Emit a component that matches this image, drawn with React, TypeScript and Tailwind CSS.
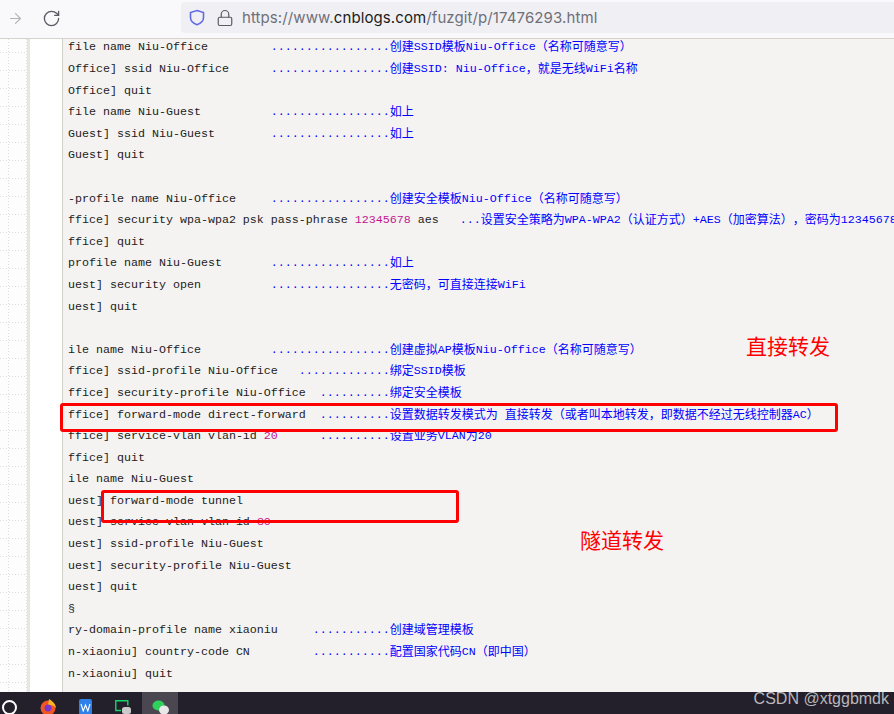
import { RotateCw, ArrowRight, Lock } from 'lucide-react';

const MONO = '"Liberation Mono", "Noto Sans CJK SC", monospace';

// k = command text, n = number, b = blue comment
type Seg = [string, string];

const c = (s: string, width = 29) => s.padEnd(width, ' ');
const dots = (n: number) => '.'.repeat(n);

const LINES: Seg[][] = [
    [['k', c('file name Niu-Office')], ['b', dots(17) + '创建SSID模板Niu-Office（名称可随意写）']],
    [['k', c('Office] ssid Niu-Office')], ['b', dots(17) + '创建SSID: Niu-Office，就是无线WiFi名称']],
    [['k', 'Office] quit']],
    [['k', c('file name Niu-Guest')], ['b', dots(17) + '如上']],
    [['k', c('Guest] ssid Niu-Guest')], ['b', dots(17) + '如上']],
    [['k', 'Guest] quit']],
    [],
    [['k', c('-profile name Niu-Office')], ['b', dots(17) + '创建安全模板Niu-Office（名称可随意写）']],
    [['k', 'ffice] security wpa-wpa2 psk pass-phrase '], ['n', '12345678'], ['k', ' aes   '], ['b', '...设置安全策略为WPA-WPA2（认证方式）+AES（加密算法），密码为12345678']],
    [['k', 'ffice] quit']],
    [['k', c('profile name Niu-Guest')], ['b', dots(17) + '如上']],
    [['k', c('uest] security open')], ['b', dots(17) + '无密码，可直接连接WiFi']],
    [['k', 'uest] quit']],
    [],
    [['k', c('ile name Niu-Office')], ['b', dots(17) + '创建虚拟AP模板Niu-Office（名称可随意写）']],
    [['k', c('ffice] ssid-profile Niu-Office', 33)], ['b', dots(13) + '绑定SSID模板']],
    [['k', c('ffice] security-profile Niu-Office', 36)], ['b', dots(10) + '绑定安全模板']],
    [['k', c('ffice] forward-mode direct-forward', 36)], ['b', dots(10) + '设置数据转发模式为 直接转发（或者叫本地转发，即数据不经过无线控制器AC）']],
    [['k', 'ffice] service-vlan vlan-id '], ['n', '20'], ['k', ' '.repeat(6)], ['b', dots(10) + '设置业务VLAN为20']],
    [['k', 'ffice] quit']],
    [['k', 'ile name Niu-Guest']],
    [['k', 'uest] forward-mode tunnel']],
    [['k', 'uest] service-vlan vlan-id '], ['n', '30']],
    [['k', 'uest] ssid-profile Niu-Guest']],
    [['k', 'uest] security-profile Niu-Guest']],
    [['k', 'uest] quit']],
    [['k', '§']],
    [['k', c('ry-domain-profile name xiaoniu', 35)], ['b', dots(11) + '创建域管理模板']],
    [['k', c('n-xiaoniu] country-code CN', 35)], ['b', dots(11) + '配置国家代码CN（即中国）']],
    [['k', 'n-xiaoniu] quit']],
];

// Chinese runs are 12px wide while the latin cells stay on a 7px pitch
function Mixed({ text }: { text: string }) {
    const parts = text.split(/([\u3000-\u9fff\uff00-\uffef]+)/);
    return (
        <>
            {parts.map((part, i) =>
                i % 2 === 1 ? (
                    <span key={i} className="text-[12px] align-[-1px] [text-spacing-trim:space-all]">
                        {part}
                    </span>
                ) : (
                    part
                ),
            )}
        </>
    );
}

function CodeLine({ segs }: { segs: Seg[] }) {
    return (
        <div className="h-[21.6px] whitespace-pre">
            {segs.map(([kind, text], i) => (
                <span
                    key={i}
                    className={kind === 'k' ? 'text-[#1c1c1c]' : kind === 'n' ? 'text-[#c0168f]' : 'text-[#0000ff]'}
                >
                    <Mixed text={text} />
                </span>
            ))}
        </div>
    );
}

function Toolbar() {
    return (
        <div className="h-[39px] shrink-0 flex items-center bg-[#f9f9fb] border-b border-[#d6d3cd]">
            <ArrowRight size={17} strokeWidth={1.6} className="ml-[7px] mb-[2px] text-[#b4b4b8]" />
            <RotateCw size={19} strokeWidth={1.7} className="ml-[18px] mb-[2px] text-[#5b5b66]" />
            <div className="ml-[120px] w-[714px] h-[31px] mb-[3px] rounded-l-[4px] bg-[#f0f0f4] flex items-center">
                <svg width="16" height="17" viewBox="0 0 16 17" className="ml-[8px]" fill="none">
                    <defs>
                        <linearGradient id="shield" x1="1" y1="16" x2="15" y2="1">
                            <stop offset="0" stopColor="#2f7bf0" />
                            <stop offset="1" stopColor="#8f5ad8" />
                        </linearGradient>
                    </defs>
                    <path
                        d="M8 1.500 14.500 3.500v5c0 3.500-3 6-6.500 7.200C4.500 14.500 1.500 12 1.500 8.500v-5z"
                        stroke="url(#shield)"
                        strokeWidth="1.600"
                    />
                </svg>
                <Lock size={18} strokeWidth={1.6} className="ml-[11px] text-[#5b5b66]" />
                <span className="ml-[8px] pt-[1px] text-[15px] tracking-[0.1px] text-[#6f6f78] font-['Inter',sans-serif]">
                    https://www.<span className="text-[#1b1b20]">cnblogs.com</span>/fuzgit/p/17476293.html
                </span>
            </div>
        </div>
    );
}

function Taskbar() {
    return (
        <div className="h-[22px] shrink-0 bg-[#231f2b] flex items-start overflow-hidden">
            <div className="ml-[2px] mt-[8px] w-[15px] h-[15px] rounded-full border-[2px] border-white" />
            {/* firefox */}
            <svg width="16" height="16" viewBox="0 0 16 16" className="ml-[23px] mt-[7px]">
                <circle cx="8" cy="9" r="7.500" fill="#f2551f" />
                <path d="M9 0c3 2 6.500 4 7 9-1.500-2-4-3.500-8-3z" fill="#fbb326" />
                <circle cx="8" cy="9" r="3.500" fill="#7b35c8" />
            </svg>
            {/* wps */}
            <div className="ml-[23px] mt-[7px] w-[13px] h-[16px] rounded-[2px] bg-[#2f80e8] flex justify-center">
                <svg width="11" height="9" viewBox="0 0 11 9" className="mt-[4px]" fill="none">
                    <path d="M1 1l2.200 7L5.500 2l2.300 6L10 1" stroke="#fff" strokeWidth="1.100" />
                </svg>
            </div>
            {/* green window with chat bubble */}
            <svg width="16" height="15" viewBox="0 0 16 15" className="ml-[23px] mt-[8px]" fill="none">
                <path d="M6 10.500H.8V.8h12v4.700" stroke="#17d46a" strokeWidth="1.400" />
                <rect x="7" y="7" width="9" height="7" rx="2.500" fill="#c9c9c9" />
            </svg>
            {/* wechat, active */}
            <div className="ml-[11px] w-[36px] h-[22px] bg-[#4b4750] flex justify-center">
                <svg width="17" height="15" viewBox="0 0 17 15" className="mt-[8px]">
                    <ellipse cx="6.500" cy="5.500" rx="6" ry="5" fill="#2fd15c" />
                    <ellipse cx="12" cy="10" rx="5" ry="4.500" fill="#e8e8e8" />
                </svg>
            </div>
        </div>
    );
}

export default function App() {
    return (
        <div className="relative w-[894px] h-[714px] flex flex-col overflow-hidden bg-white">
            <Toolbar />
            <div className="flex-1 min-h-0 flex">
                {/* Blog background with dotted grid */}
                <div className="w-[30px] shrink-0 border-r-[3px] border-[#e8e6e1] bg-[#fdfdfd] bg-[radial-gradient(circle_at_0_0,#dedede_1px,transparent_1px),radial-gradient(circle_at_0_0,#dedede_1px,transparent_1px)] bg-[size:3px_18px,18px_3px] bg-[position:0_13px,8px_0]" />
                <div className="w-[33px] shrink-0 bg-white border-r-[1px] border-[#d3d0ca]" />
                <div
                    className="flex-1 min-w-0 overflow-hidden bg-[#f5f3f2] pl-[5px] text-[11.67px] leading-[21.6px]"
                    style={{ fontFamily: MONO }}
                >
                    <div className="-mt-[1.6px]">
                        {LINES.map((segs, i) => (
                            <CodeLine key={i} segs={segs} />
                        ))}
                    </div>
                </div>
            </div>
            <Taskbar />

            {/* Watermark and red annotations drawn over the screenshot */}
            <span className="absolute right-[5px] top-[689px] text-[16px] leading-[20px] text-[#b9b8ba] font-['Liberation_Sans',sans-serif]">
                CSDN @xtggbmdk
            </span>
            <div className="absolute left-[60px] top-[403px] w-[778px] h-[29px] border-[3px] border-[#ff0000] rounded-[3px]" />
            <div className="absolute left-[101px] top-[490px] w-[358px] h-[33px] border-[3px] border-[#ff0000] rounded-[3px]" />
            <div className="absolute left-[746px] top-[331px] text-[21px] leading-[28px] text-[#ff0000] font-['Noto_Sans_CJK_SC',sans-serif]">
                直接转发
            </div>
            <div className="absolute left-[580px] top-[525px] text-[21px] leading-[28px] text-[#ff0000] font-['Noto_Sans_CJK_SC',sans-serif]">
                隧道转发
            </div>
        </div>
    );
}
